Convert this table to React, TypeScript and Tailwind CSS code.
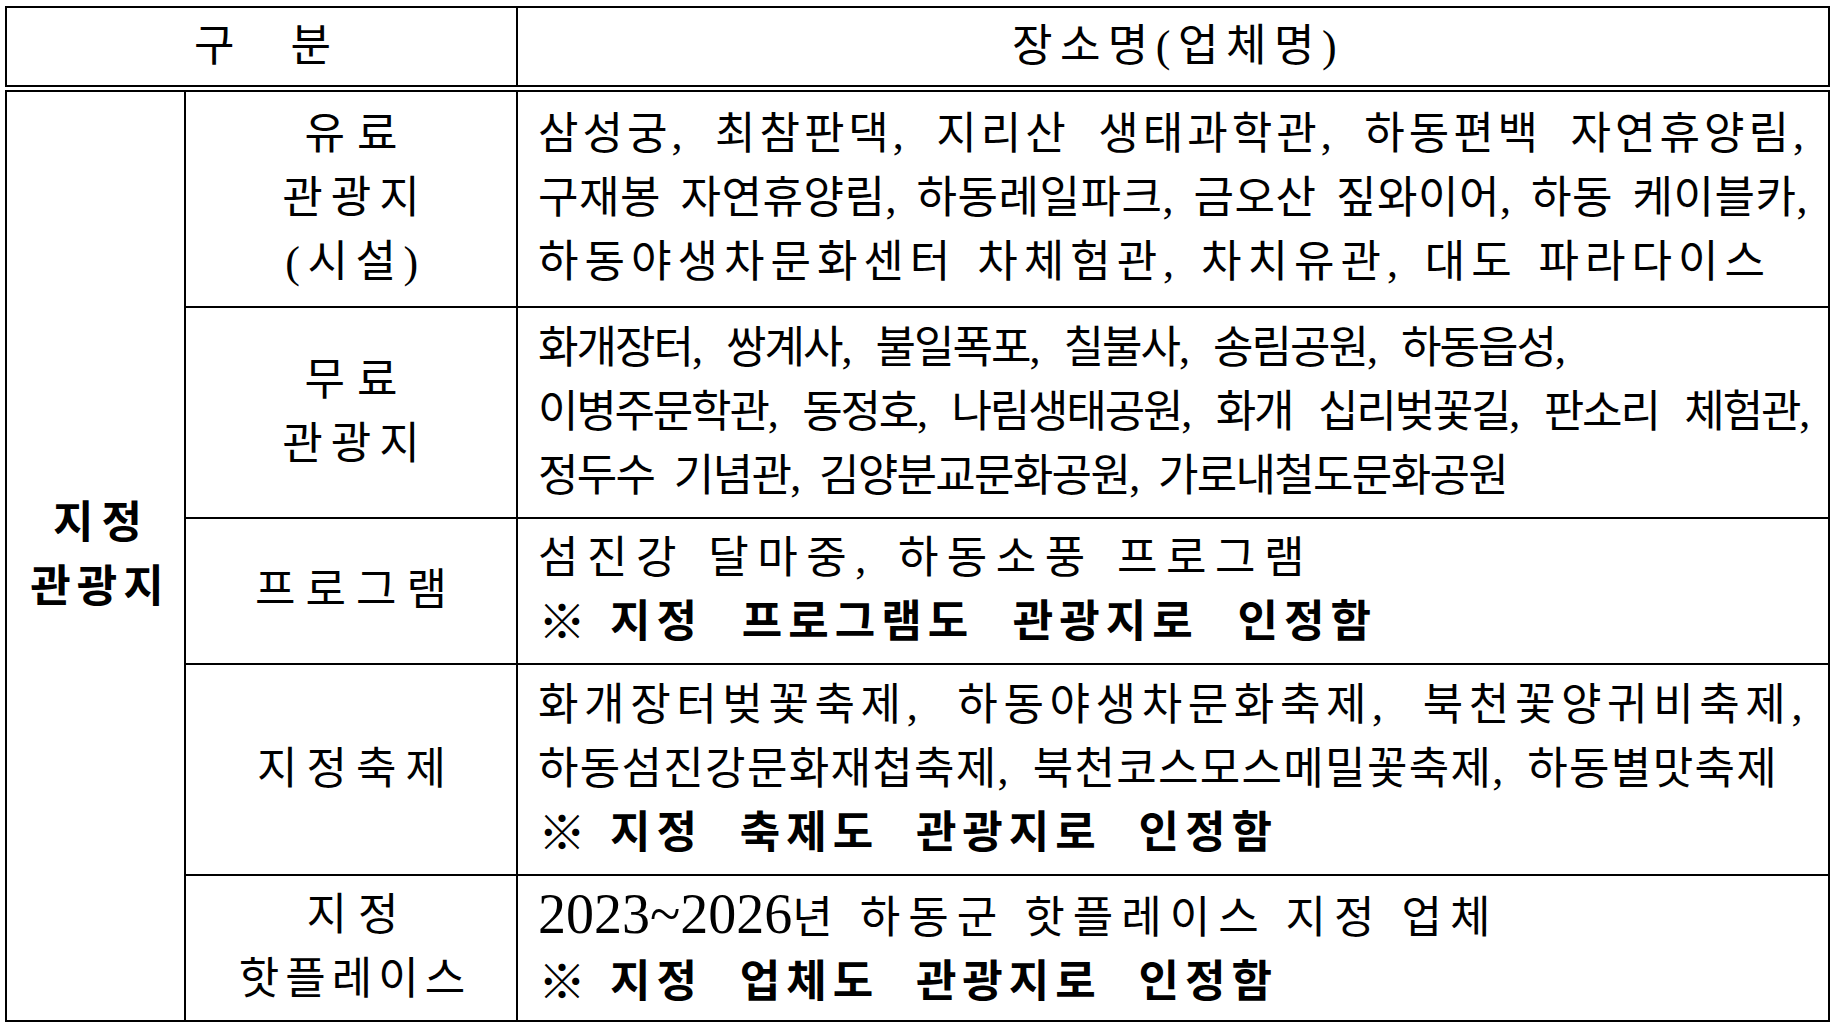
import type { ReactNode } from "react";

// one line of a cell; width + tracking are set per line so the gaps land where the original sits
function Line({ children, className = "" }: { children: ReactNode; className?: string }) {
  return <div className={`shrink-0 whitespace-nowrap ${className}`}>{children}</div>;
}

// "※ ..." note lines: mark gets its own slot, the rest is spread over a fixed width
function Note({ children, className }: { children: ReactNode; className: string }) {
  return (
    <div className="flex items-center">
      <span className="w-[72px] shrink-0 text-[48px] font-bold">※</span>
      <Line className={`font-semibold tracking-[6px] [text-align-last:justify] ${className}`}>{children}</Line>
    </div>
  );
}

function Label({ lines }: { lines: { text: string; className: string }[] }) {
  return (
    <div className="flex flex-col items-center">
      {lines.map((l) => (
        <div key={l.text} className={`whitespace-nowrap ${l.className}`}>
          {l.text}
        </div>
      ))}
    </div>
  );
}

const cell = "border-2 border-black align-middle";
const body = `${cell} px-[20px] text-left`;

export default function App() {
  return (
    <div
      lang="ko"
      className="min-h-screen bg-white pl-[5px] pt-[6px] font-['Liberation_Serif','Noto_Sans_CJK_KR',serif] text-[44px] leading-[64px] text-black"
    >
      <table className="w-[1823px] table-fixed border-collapse">
        <colgroup>
          <col className="w-[179px]" />
          <col className="w-[332px]" />
          <col className="w-[1312px]" />
        </colgroup>
        <thead>
          <tr className="h-[81.5px]">
            <th colSpan={2} className={`${cell} border-b-[7px] border-double font-normal`}>
              <div className="flex justify-center gap-[56px] pl-[2px]">
                <span>구</span>
                <span>분</span>
              </div>
            </th>
            <th className={`${cell} border-b-[7px] border-double pl-[10px] font-normal tracking-[7.5px]`}>
              장소명(업체명)
            </th>
          </tr>
        </thead>
        <tbody>
          <tr className="h-[218.5px]">
            <td rowSpan={5} className={`${cell} text-center font-semibold`}>
              <Label
                lines={[
                  { text: "지정", className: "pl-[12px] tracking-[8px]" },
                  { text: "관광지", className: "pl-[9px] tracking-[6px]" },
                ]}
              />
            </td>
            <td className={`${cell} text-center`}>
              <Label
                lines={[
                  { text: "유료", className: "pl-[12px] tracking-[12px]" },
                  { text: "관광지", className: "pl-[8px] tracking-[8px]" },
                  { text: "(시설)", className: "pl-[9px] tracking-[7.5px]" },
                ]}
              />
            </td>
            <td className={body}>
              <Line className="w-full tracking-[4px] [text-align-last:justify]">
                삼성궁, 최참판댁, 지리산 생태과학관, 하동편백 자연휴양림,
              </Line>
              <Line className="w-full tracking-[0.5px] [text-align-last:justify]">
                구재봉 자연휴양림, 하동레일파크, 금오산 짚와이어, 하동 케이블카,
              </Line>
              <Line className="w-[1233px] tracking-[6px] [text-align-last:justify]">
                하동야생차문화센터 차체험관, 차치유관, 대도 파라다이스
              </Line>
            </td>
          </tr>
          <tr className="h-[211px]">
            <td className={`${cell} text-center`}>
              <Label
                lines={[
                  { text: "무료", className: "pl-[12px] tracking-[12px]" },
                  { text: "관광지", className: "pl-[8px] tracking-[8px]" },
                ]}
              />
            </td>
            <td className={body}>
              <Line className="w-[1026px] tracking-[-2px] [text-align-last:justify]">
                화개장터, 쌍계사, 불일폭포, 칠불사, 송림공원, 하동읍성,
              </Line>
              <Line className="w-full tracking-[-2.2px] [text-align-last:justify]">
                이병주문학관, 동정호, 나림생태공원, 화개 십리벚꽃길, 판소리 체험관,
              </Line>
              <Line className="w-[969px] tracking-[-1.7px] [text-align-last:justify]">
                정두수 기념관, 김양분교문화공원, 가로내철도문화공원
              </Line>
            </td>
          </tr>
          <tr className="h-[146px]">
            <td className={`${cell} text-center`}>
              <Label lines={[{ text: "프로그램", className: "pl-[10px] tracking-[10px]" }]} />
            </td>
            <td className={body}>
              <Line className="w-[775px] tracking-[8.5px] [text-align-last:justify]">섬진강 달마중, 하동소풍 프로그램</Line>
              <Note className="w-[767px]">지정 프로그램도 관광지로 인정함</Note>
            </td>
          </tr>
          <tr className="h-[211px]">
            <td className={`${cell} text-center`}>
              <Label lines={[{ text: "지정축제", className: "pl-[10px] tracking-[9px]" }]} />
            </td>
            <td className={body}>
              <Line className="w-full tracking-[5.6px] [text-align-last:justify]">
                화개장터벚꽃축제, 하동야생차문화축제, 북천꽃양귀비축제,
              </Line>
              <Line className="w-[1240px] tracking-[1.3px] [text-align-last:justify]">
                하동섬진강문화재첩축제, 북천코스모스메밀꽃축제, 하동별맛축제
              </Line>
              <Note className="w-[668px]">지정 축제도 관광지로 인정함</Note>
            </td>
          </tr>
          <tr className="h-[146px]">
            <td className={`${cell} text-center`}>
              <Label
                lines={[
                  { text: "지정", className: "pl-[14px] tracking-[11px]" },
                  { text: "핫플레이스", className: "pl-[8px] tracking-[6px]" },
                ]}
              />
            </td>
            <td className={body}>
              <Line className="w-[945px] tracking-[8px] [text-align-last:justify]">
                <span className="text-[56px] tracking-normal">2023~2026</span>년 하동군 핫플레이스 지정 업체
              </Line>
              <Note className="w-[668px]">지정 업체도 관광지로 인정함</Note>
            </td>
          </tr>
        </tbody>
      </table>
    </div>
  );
}
